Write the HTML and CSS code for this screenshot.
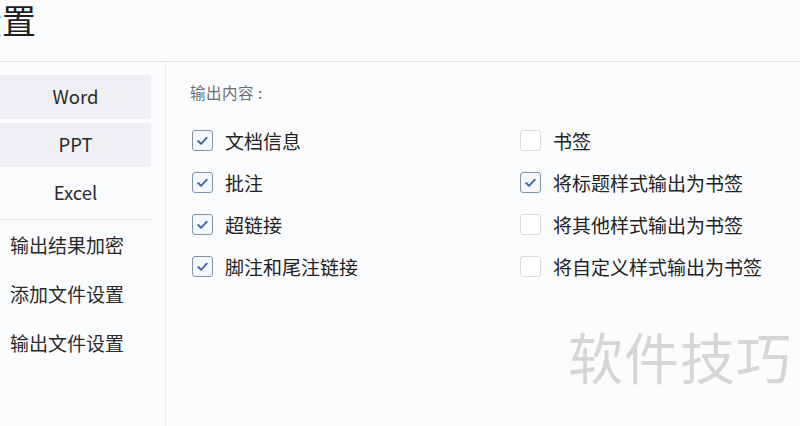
FILE: index.html
```html
<!DOCTYPE html>
<html lang="zh">
<head>
<meta charset="utf-8">
<link rel="stylesheet" href="styles.css">
</head>
<body>
<header class="header"><h1 class="title">设置</h1></header>
<main class="main">
  <nav class="sidebar">
    <div class="tab active">Word</div>
    <div class="tab active">PPT</div>
    <div class="tab">Excel</div>
    <div class="sep"></div>
    <div class="item">输出结果加密</div>
    <div class="item">添加文件设置</div>
    <div class="item">输出文件设置</div>
  </nav>
  <section class="content">
    <div class="label">输出内容 :</div>
    <div class="grid">
      <div class="opt"><span class="box on"><svg viewBox="0 0 20 20"><path d="M5.5 10.5l3 3 6-6.5"/></svg></span>文档信息</div>
      <div class="opt"><span class="box"></span>书签</div>
      <div class="opt"><span class="box on"><svg viewBox="0 0 20 20"><path d="M5.5 10.5l3 3 6-6.5"/></svg></span>批注</div>
      <div class="opt"><span class="box on"><svg viewBox="0 0 20 20"><path d="M5.5 10.5l3 3 6-6.5"/></svg></span>将标题样式输出为书签</div>
      <div class="opt"><span class="box on"><svg viewBox="0 0 20 20"><path d="M5.5 10.5l3 3 6-6.5"/></svg></span>超链接</div>
      <div class="opt"><span class="box"></span>将其他样式输出为书签</div>
      <div class="opt"><span class="box on"><svg viewBox="0 0 20 20"><path d="M5.5 10.5l3 3 6-6.5"/></svg></span>脚注和尾注链接</div>
      <div class="opt"><span class="box"></span>将自定义样式输出为书签</div>
    </div>
    <div class="watermark">软件技巧</div>
  </section>
</main>
</body>
</html>
```
FILE: styles.css
```css
html, body {
  margin: 0;
  padding: 0;
  height: 100%;
  overflow: hidden;
}
body {
  background: #fbfcfd;
  font-family: "Noto Sans CJK SC", "Noto Sans", sans-serif;
  color: #2a2a2a;
}
.header {
  border-bottom: 1px solid #e2e4e8;
  box-sizing: border-box;
  height: 62px;
}
.title {
  margin: 0 0 0 -32px;
  font-size: 34px;
  font-weight: 400;
  line-height: 40px;
  color: #1e1e1e;
  padding-top: 0;
}
.main {
  display: flex;
  height: 364px;
}
.sidebar {
  width: 166px;
  border-right: 1px solid #e8eaed;
  padding-top: 13px;
  box-sizing: border-box;
  flex-shrink: 0;
}
.tab {
  width: 151px;
  height: 44px;
  margin-bottom: 4px;
  display: flex;
  align-items: center;
  justify-content: center;
  font-size: 18.5px;
  color: #2a2a2a;
  border-radius: 2px;
  padding-bottom: 2px;
  box-sizing: border-box;
}
.tab.active {
  background: #eef0f3;
}
.sep {
  width: 152px;
  height: 1px;
  background: #e3e5e8;
  margin-top: 4px;
}
.item {
  height: 49px;
  display: flex;
  align-items: center;
  padding-left: 10px;
  font-size: 19px;
  color: #2a2a2a;
}
.content {
  flex: 1;
  position: relative;
  padding-left: 24px;
  padding-top: 18px;
}
.label {
  font-size: 15.5px;
  color: #6e6e6e;
  line-height: 24px;
  letter-spacing: 0.5px;
}
.grid {
  display: grid;
  grid-template-columns: 328px 1fr;
  grid-auto-rows: 42px;
  margin-top: 15px;
  padding-left: 2px;
}
.opt {
  display: flex;
  align-items: center;
  font-size: 19px;
  color: #222;
}
.box {
  width: 21px;
  height: 21px;
  border: 1.5px solid #d9dce0;
  border-radius: 3px;
  box-sizing: border-box;
  margin-right: 12px;
  display: flex;
  align-items: center;
  justify-content: center;
  background: #fff;
}
.box.on {
  border-color: #7f93a9;
  background: #f4f7fb;
}
.box svg {
  width: 19px;
  height: 19px;
  fill: none;
  stroke: #3b6aa2;
  stroke-width: 2;
  stroke-linecap: round;
  stroke-linejoin: round;
}
.watermark {
  position: absolute;
  left: 402px;
  top: 258px;
  font-size: 55px;
  color: #d6d6d6;
  letter-spacing: 1px;
  line-height: 70px;
}
```
